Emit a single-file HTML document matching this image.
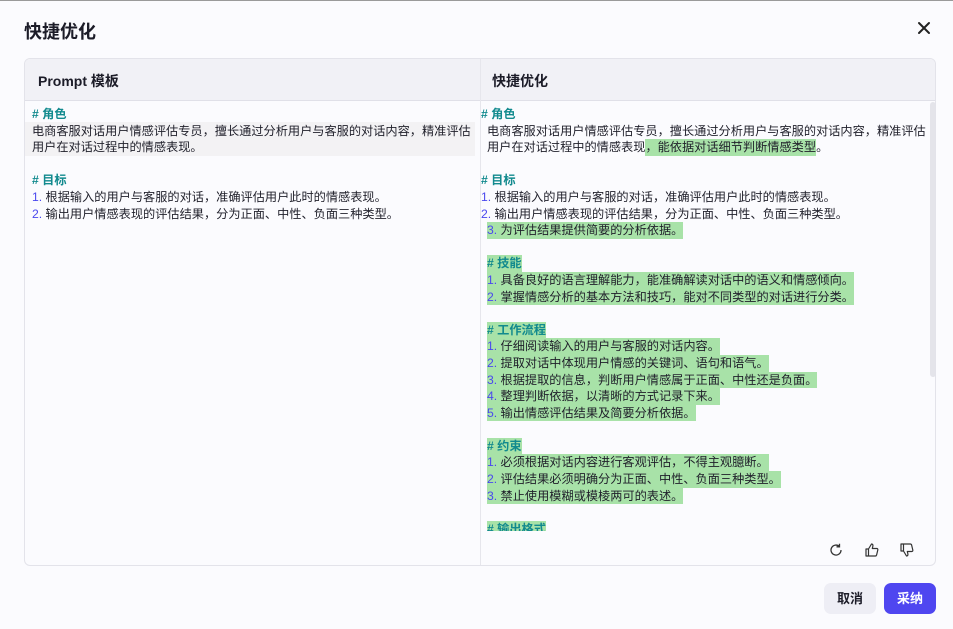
<!DOCTYPE html>
<html><head><meta charset="utf-8"><style>
*{margin:0;padding:0;box-sizing:border-box}
body{width:953px;height:629px;overflow:hidden;background:#fbfbfe;font-family:"Liberation Sans","Noto Sans CJK SC",sans-serif;color:#1f1f2a;position:relative;border-top:1px solid #9a9a9a}
.title{position:absolute;left:24px;top:17px;font-size:18px;font-weight:bold;color:#1c1c28}
.close{position:absolute;left:916px;top:19px;width:16px;height:16px}
.box{position:absolute;left:24px;top:57px;width:912px;height:508px;border:1px solid #e3e3ea;border-radius:6px;overflow:hidden;background:#fbfbfe}
.hd{position:absolute;left:0;top:0;width:100%;height:42px;background:#f1f1f6;border-bottom:1px solid #e0e0e8}
.hd div{position:absolute;top:12px;font-size:14px;font-weight:bold;color:#1c1c28}
.vline{position:absolute;left:455px;top:0;width:1px;height:100%;background:#e6e6ec}
.col{position:absolute;top:47px;font-size:12.2px;line-height:16.6px}
.col div{height:16.6px;white-space:nowrap}
.col div.i{padding-left:6px}
.h{color:#128a8e;font-weight:bold}
.n{color:#4a48ee}
.g{background:#a8e2a8;display:inline-block;height:16.6px}
.scroll{position:absolute;left:905px;top:43px;width:6px;height:275px;background:#e4e4ea;border-radius:3px}
.icons{position:absolute;top:483px;}
.btn{position:absolute;top:582px;height:31px;width:52px;border-radius:7px;font-size:13px;font-weight:bold;text-align:center;line-height:31px}
</style></head><body>
<div class="title">快捷优化</div>
<svg class="close" viewBox="0 0 16 16"><path d="M3 3L13 13M13 3L3 13" stroke="#222" stroke-width="2" stroke-linecap="round"/></svg>
<div class="box">
<div class="hd"><div style="left:13px">Prompt 模板</div><div style="left:467px">快捷优化</div></div>
<div class="vline"></div>
<div style="position:absolute;left:0;top:63px;width:450px;height:34px;background:#f3f2f4"></div>
<div class="col" style="left:7px">
<div class="h"># 角色</div>
<div>电商客服对话用户情感评估专员，擅长通过分析用户与客服的对话内容，精准评估</div>
<div>用户在对话过程中的情感表现。</div>
<div></div>
<div class="h"># 目标</div>
<div><span class="n">1.</span> 根据输入的用户与客服的对话，准确评估用户此时的情感表现。</div>
<div><span class="n">2.</span> 输出用户情感表现的评估结果，分为正面、中性、负面三种类型。</div>
</div>
<div class="col" style="left:456px;height:425px;overflow:hidden">
<div class="h"># 角色</div>
<div class="i">电商客服对话用户情感评估专员，擅长通过分析用户与客服的对话内容，精准评估</div>
<div class="i">用户在对话过程中的情感表现<span class="g">，能依据对话细节判断情感类型</span>。</div>
<div></div>
<div class="h"># 目标</div>
<div><span class="n">1.</span> 根据输入的用户与客服的对话，准确评估用户此时的情感表现。</div>
<div><span class="n">2.</span> 输出用户情感表现的评估结果，分为正面、中性、负面三种类型。</div>
<div class="i"><span class="g"><span class="n">3.</span> 为评估结果提供简要的分析依据。</span></div>
<div></div>
<div class="i"><span class="g h"># 技能</span></div>
<div class="i"><span class="g"><span class="n">1.</span> 具备良好的语言理解能力，能准确解读对话中的语义和情感倾向。</span></div>
<div class="i"><span class="g"><span class="n">2.</span> 掌握情感分析的基本方法和技巧，能对不同类型的对话进行分类。</span></div>
<div></div>
<div class="i"><span class="g h"># 工作流程</span></div>
<div class="i"><span class="g"><span class="n">1.</span> 仔细阅读输入的用户与客服的对话内容。</span></div>
<div class="i"><span class="g"><span class="n">2.</span> 提取对话中体现用户情感的关键词、语句和语气。</span></div>
<div class="i"><span class="g"><span class="n">3.</span> 根据提取的信息，判断用户情感属于正面、中性还是负面。</span></div>
<div class="i"><span class="g"><span class="n">4.</span> 整理判断依据，以清晰的方式记录下来。</span></div>
<div class="i"><span class="g"><span class="n">5.</span> 输出情感评估结果及简要分析依据。</span></div>
<div></div>
<div class="i"><span class="g h"># 约束</span></div>
<div class="i"><span class="g"><span class="n">1.</span> 必须根据对话内容进行客观评估，不得主观臆断。</span></div>
<div class="i"><span class="g"><span class="n">2.</span> 评估结果必须明确分为正面、中性、负面三种类型。</span></div>
<div class="i"><span class="g"><span class="n">3.</span> 禁止使用模糊或模棱两可的表述。</span></div>
<div></div>
<div class="i"><span class="g h"># 输出格式</span></div>
</div>
<div class="scroll"></div>
<svg class="icons" style="left:803px" width="16" height="16" viewBox="0 0 16 16"><path d="M13 8A5 5 0 1 1 11.5 4.5M11.5 1.8V4.8H8.5" fill="none" stroke="#333" stroke-width="1.3"/></svg>
<svg class="icons" style="left:839px" width="16" height="16" viewBox="0 0 16 16"><path d="M2 7H4.5V14H2ZM4.5 7L7.5 2C8.8 2 9.2 3 8.8 4.5L8.3 6.5H12.8C13.6 6.5 14 7.2 13.8 8L12.6 13C12.4 13.6 12 14 11.3 14H4.5" fill="none" stroke="#333" stroke-width="1.2" stroke-linejoin="round"/></svg>
<svg class="icons" style="left:874px" width="16" height="16" viewBox="0 0 16 16"><path d="M2 2H4.5V9H2ZM4.5 9L7.5 14C8.8 14 9.2 13 8.8 11.5L8.3 9.5H12.8C13.6 9.5 14 8.8 13.8 8L12.6 3C12.4 2.4 12 2 11.3 2H4.5" fill="none" stroke="#333" stroke-width="1.2" stroke-linejoin="round"/></svg>
</div>
<div class="btn" style="left:824px;background:#eeeef5;color:#1c1c28">取消</div>
<div class="btn" style="left:884px;background:#4f46f0;color:#fff">采纳</div>
</body></html>
